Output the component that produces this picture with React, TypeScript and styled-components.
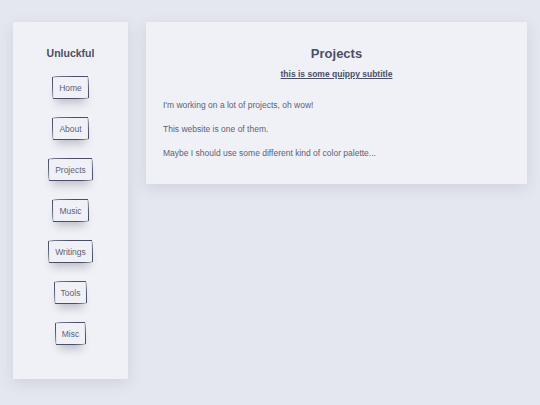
import styled, { createGlobalStyle } from "styled-components";

const GlobalStyle = createGlobalStyle`
  body {
    margin: 0;
    background: #e4e7ef;
    font-family: "Liberation Sans", Arial, sans-serif;
    color: #4a4e69;
  }
`;

const links = ["Home", "About", "Projects", "Music", "Writings", "Tools", "Misc"];

const paragraphs = [
  "I'm working on a lot of projects, oh wow!",
  "This website is one of them.",
  "Maybe I should use some different kind of color palette...",
];

const App: React.FC = () => {
  return (
    <>
      <GlobalStyle />
      <Page>
        <Sidebar>
          <SiteName>Unluckful</SiteName>
          <Nav>
            {links.map((link) => (
              <NavButton key={link}>{link}</NavButton>
            ))}
          </Nav>
        </Sidebar>
        <Main>
          <Title>Projects</Title>
          <Subtitle>this is some quippy subtitle</Subtitle>
          {paragraphs.map((text) => (
            <Paragraph key={text}>{text}</Paragraph>
          ))}
        </Main>
      </Page>
    </>
  );
};

export default App;

const Page = styled.div`
  display: flex;
  align-items: flex-start;
  gap: 18px;
  padding: 22px 13px 26px 13px;
  height: 405px;
  box-sizing: border-box;
`;

const Sidebar = styled.aside`
  width: 115px;
  height: 357px;
  flex-shrink: 0;
  box-sizing: border-box;
  background: #f0f1f6;
  box-shadow: 0 4px 14px rgba(60, 64, 90, 0.12);
  padding: 25px 0 0 0;
  display: flex;
  flex-direction: column;
  align-items: center;
`;

const SiteName = styled.h1`
  margin: 0;
  font-size: 10.5px;
  font-weight: bold;
  color: #4a4e69;
`;

const Nav = styled.nav`
  display: flex;
  flex-direction: column;
  align-items: center;
  gap: 18px;
  margin-top: 17px;
`;

const NavButton = styled.button`
  font-family: "Liberation Sans", Arial, sans-serif;
  font-size: 8.5px;
  color: #5c5f77;
  background: transparent;
  border: 1px solid #4a4e69;
  border-radius: 255px 15px 225px 15px / 15px 225px 15px 255px;
  padding: 6px 6px 5px 6px;
  line-height: 10px;
  box-shadow: 0 8px 9px -4px rgba(40, 44, 70, 0.25);
  cursor: pointer;
`;

const Main = styled.main`
  flex: 1;
  box-sizing: border-box;
  height: 162px;
  background: #f0f1f6;
  box-shadow: 0 4px 14px rgba(60, 64, 90, 0.12);
  padding: 24px 17px 0 17px;
`;

const Title = styled.h2`
  margin: 0;
  text-align: center;
  font-size: 13px;
  line-height: 15px;
  font-weight: bold;
  color: #4a4e69;
`;

const Subtitle = styled.h3`
  margin: 8px 0 21px 0;
  text-align: center;
  font-size: 8.5px;
  line-height: 10px;
  font-weight: bold;
  text-decoration: underline;
  color: #4a4e69;
`;

const Paragraph = styled.p`
  margin: 0 0 14px 0;
  font-size: 8.5px;
  line-height: 10px;
  color: #5c5f77;
`;
